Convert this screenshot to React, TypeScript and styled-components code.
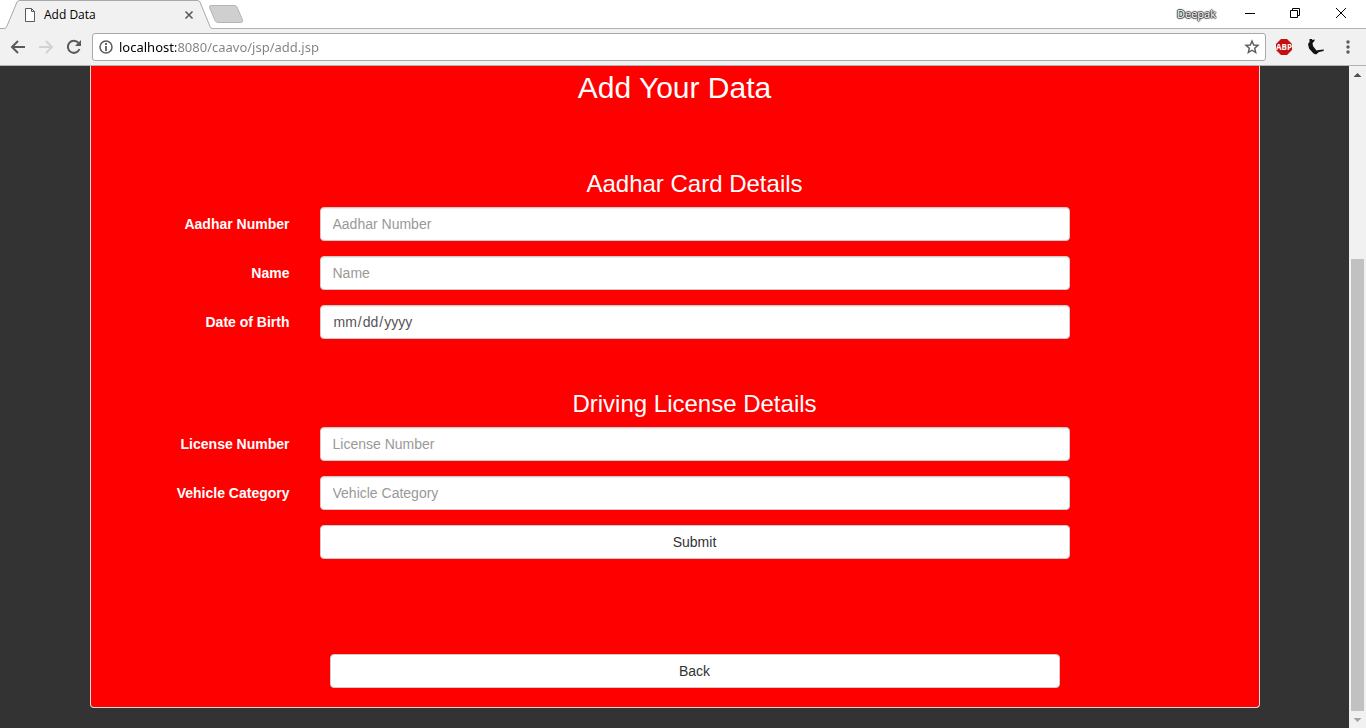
import React from 'react';
import styled, { createGlobalStyle } from 'styled-components';

const GlobalStyle = createGlobalStyle`
  *, *::before, *::after { box-sizing: border-box; }
  body {
    margin: 0;
    font-family: "Liberation Sans", Arial, sans-serif;
    font-size: 14px;
    line-height: 20px;
    color: #333;
  }
`;

const Browser = styled.div`
  display: flex;
  flex-direction: column;
  height: 100vh;
  overflow: hidden;
`;

const TitleBar = styled.header`
  display: flex;
  height: 29px;
  background: #fff;
  border-bottom: 1px solid #b3b3b3;
`;

const Tab = styled.div`
  position: relative;
  display: flex;
  align-items: center;
  width: 212px;
  height: 29px;
  padding: 0 17px 0 24px;
`;

const TabShape = styled.svg`
  position: absolute;
  inset: 0;
`;

const TabTitle = styled.span`
  position: relative;
  flex: 1;
  padding-left: 8px;
  font: 12px/20px "Open Sans", sans-serif;
  color: #000;
`;

const IconButton = styled.button<{ $width?: number }>`
  position: relative;
  display: flex;
  align-items: center;
  justify-content: center;
  width: ${({ $width }) => $width ?? 28}px;
  padding: 0;
  border: 0;
  background: none;
  color: #5a5a5a;
`;

const Icon = styled.svg`
  position: relative;
  display: block;
  flex: none;
`;

const WindowControls = styled.div`
  display: flex;
  align-items: stretch;
  height: 26px;
  margin-left: auto;
`;

const UserName = styled.span`
  padding: 0 10px;
  font: 11px/28px "Open Sans", sans-serif;
  color: #fff;
  text-shadow: 1px 0 1px #333, -1px 0 1px #333, 0 1px 1px #333, 0 -1px 1px #333;
`;

const Toolbar = styled.nav`
  display: flex;
  align-items: center;
  height: 37px;
  padding-left: 4px;
  background: #f1f1f1;
  border-bottom: 1px solid #b3b3b3;
`;

const AddressBar = styled.div`
  display: flex;
  flex: 1;
  align-items: center;
  height: 28px;
  margin-left: 4px;
  padding-left: 6px;
  background: #fff;
  border: 1px solid #a9a9a9;
  border-radius: 3px;
`;

const Address = styled.input`
  flex: 1;
  min-width: 0;
  height: 24px;
  margin-left: 6px;
  padding: 0;
  border: 0;
  outline: 0;
  font: 13px/24px "Noto Sans", sans-serif;
  color: transparent;
  background: linear-gradient(to right, #000 57px, #808080 57px);
  background-clip: text;
  -webkit-background-clip: text;
`;

const Viewport = styled.div`
  display: flex;
  flex: 1;
  min-height: 0;
  background: #333;
`;

const Page = styled.main`
  flex: 1;
  min-width: 0;
  overflow: hidden;
`;

const Panel = styled.section`
  max-width: 1170px;
  margin: 0 auto;
  padding: 5px 0 19px;
  background: #f00;
  border: 1px solid #ddd;
  border-top: 0;
  border-radius: 0 0 4px 4px;
  color: #fff;
`;

const Title = styled.h1`
  margin: 0;
  font-size: 30px;
  line-height: 33px;
  font-weight: 500;
  text-align: center;
`;

const Form = styled.form`
  padding-top: 30px;
`;

const Row = styled.div`
  display: grid;
  grid-template-columns: 199fr 750fr 159fr;
  column-gap: 30px;
  margin-bottom: 15px;
`;

const SectionTitle = styled.h2`
  grid-column: 2;
  margin: 37px 0 -5px;
  font-size: 24px;
  line-height: 26px;
  font-weight: 500;
  text-align: center;
`;

const Label = styled.label`
  padding-top: 7px;
  font-weight: 700;
  text-align: right;
`;

const Field = styled.input`
  width: 100%;
  height: 34px;
  padding: 6px 12px;
  font: 14px/20px "Liberation Sans", Arial, sans-serif;
  color: #555;
  background: #fff;
  border: 1px solid #ccc;
  border-radius: 4px;
  box-shadow: inset 0 1px 1px rgba(0, 0, 0, 0.08);
  &::placeholder { color: #999; opacity: 1; }
  &::-webkit-calendar-picker-indicator { display: none; }
`;

const Button = styled.button`
  grid-column: 2;
  height: 34px;
  padding: 6px 12px;
  font: 14px/20px "Liberation Sans", Arial, sans-serif;
  color: #333;
  background: #fff;
  border: 1px solid #ccc;
  border-radius: 4px;
`;

const BackRow = styled(Row)`
  margin: 95px 0 0;
  & > ${Button} { margin: 0 10px; }
`;

const Scrollbar = styled.aside`
  display: flex;
  flex-direction: column;
  align-items: center;
  width: 17px;
  padding: 0 2px;
  background: #f1f1f1;
`;

const Track = styled.div`
  display: flex;
  flex: 1;
  flex-direction: column;
  justify-content: flex-end;
  width: 100%;
`;

const Thumb = styled.div`
  height: 72%;
  background: #c1c1c1;
`;

interface FieldSpec {
  id: string;
  label: string;
  type?: string;
}

const aadharFields: FieldSpec[] = [
  { id: 'aadhar-number', label: 'Aadhar Number' },
  { id: 'name', label: 'Name' },
  { id: 'dob', label: 'Date of Birth', type: 'date' },
];

const licenseFields: FieldSpec[] = [
  { id: 'license-number', label: 'License Number' },
  { id: 'vehicle-category', label: 'Vehicle Category' },
];

function FieldGroup({ title, fields }: { title: string; fields: FieldSpec[] }) {
  return (
    <>
      <Row><SectionTitle>{title}</SectionTitle></Row>
      {fields.map(({ id, label, type = 'text' }) => (
        <Row key={id}>
          <Label htmlFor={id}>{label}</Label>
          <Field id={id} name={id} type={type} placeholder={label} />
        </Row>
      ))}
    </>
  );
}

function TabStrip() {
  return (
    <TitleBar>
      <Tab>
        <TabShape width="212" height="29" aria-hidden="true">
          <path d="M0 29V28.500H4Q6 28.500 7 26L17 2Q18 .5 20 .5H197Q199 .5 200 2L210 26.500Q211 28.500 212 28.500V29Z" fill="#f1f1f1" />
          <path d="M0 28.500H4Q6 28.500 7 26L17 2Q18 .5 20 .5H197Q199 .5 200 2L210 26.500Q211 28.500 212 28.500" fill="none" stroke="#a9a9a9" />
        </TabShape>
        <Icon width="12" height="14" viewBox="0 0 12 14" fill="#fff" stroke="#5a5a5a" aria-hidden="true">
          <path d="M1.500 .5H7.500L10.500 3.500V13.500H1.500ZM7.500 .5V3.500H10.500" />
        </Icon>
        <TabTitle>Add Data</TabTitle>
        <IconButton $width={12} aria-label="Close tab">
          <Icon width="10" height="10" viewBox="0 0 10 10" stroke="currentColor" strokeWidth="1.600">
            <path d="M1.500 1.500L8.500 8.500M8.500 1.500L1.500 8.500" />
          </Icon>
        </IconButton>
      </Tab>
      <IconButton $width={28} aria-label="New tab">
        <Icon width="36" height="18" viewBox="0 0 36 18" fill="#cfcfcf" stroke="#b5b5b5">
          <path d="M3 .5H26Q28 .5 29 2L34.500 15Q35 17.500 33 17.500H10Q8 17.500 7 15.500L1.500 2.500Q1 .5 3 .5Z" />
        </Icon>
      </IconButton>
      <WindowControls>
        <UserName>Deepak</UserName>
        <IconButton $width={48} aria-label="Minimize">
          <Icon width="12" height="12" stroke="#000"><path d="M1 6.500H11" /></Icon>
        </IconButton>
        <IconButton $width={42} aria-label="Restore">
          <Icon width="12" height="12" stroke="#000" fill="none">
            <path d="M1.500 3.500H8.500V10.500H1.500ZM3.500 3.500V1.500H10.500V8.500H8.500" />
          </Icon>
        </IconButton>
        <IconButton $width={50} aria-label="Close">
          <Icon width="12" height="12" stroke="#000"><path d="M1 1L11 11M11 1L1 11" /></Icon>
        </IconButton>
      </WindowControls>
    </TitleBar>
  );
}

function NavBar() {
  return (
    <Toolbar>
      <IconButton aria-label="Back">
        <Icon width="16" height="16" stroke="#5a5a5a" strokeWidth="2" fill="none">
          <path d="M15 8H2.500M8 2L2 8L8 14" />
        </Icon>
      </IconButton>
      <IconButton aria-label="Forward">
        <Icon width="16" height="16" stroke="#d3d3d3" strokeWidth="2" fill="none">
          <path d="M1 8H13.500M8 2L14 8L8 14" />
        </Icon>
      </IconButton>
      <IconButton aria-label="Reload">
        <Icon width="16" height="16" fill="none">
          <path d="M13.500 10A6 6 0 1 1 12.500 4" stroke="#5a5a5a" strokeWidth="2" />
          <path d="M15 1V7H9Z" fill="#5a5a5a" />
        </Icon>
      </IconButton>
      <AddressBar>
        <Icon width="14" height="14" fill="none" stroke="#5a5a5a" aria-hidden="true">
          <circle cx="7" cy="7" r="6" strokeWidth="1.500" />
          <path d="M7 3V5M7 6V11" strokeWidth="1.800" />
        </Icon>
        <Address type="text" aria-label="Address" defaultValue="localhost:8080/caavo/jsp/add.jsp" />
        <IconButton $width={26} aria-label="Bookmark">
          <Icon width="16" height="16" fill="none" stroke="#5a5a5a" strokeWidth="1.400">
            <path d="M8 2L9.700 6L14 6.400L10.700 9.200L11.700 13.500L8 11.200L4.300 13.500L5.300 9.200L2 6.400L6.300 6Z" />
          </Icon>
        </IconButton>
      </AddressBar>
      <IconButton $width={36} aria-label="Adblock Plus">
        <Icon width="16" height="16" viewBox="0 0 16 16">
          <path d="M5 0H11L16 5V11L11 16H5L0 11V5Z" fill="#c70d0d" />
          <text x="8" y="11" fontFamily="Open Sans, sans-serif" fontSize="8" fontWeight="700" fill="#fff" textAnchor="middle">ABP</text>
        </Icon>
      </IconButton>
      <IconButton aria-label="Extension">
        <Icon width="18" height="16" viewBox="0 0 18 16" fill="#111">
          <path d="M2.500 0H5L5.500 1L8 .5L7 2.500L5.500 4L6 7L7.500 9L9.500 11.500L12 11L17 10.500L16.500 12L12 13L9 15.500L6.500 14.500L2 9.500L1 5L2.500 3Z" />
        </Icon>
      </IconButton>
      <IconButton $width={36} aria-label="Menu">
        <Icon width="4" height="14" fill="#5a5a5a">
          <circle cx="2" cy="2" r="1.700" />
          <circle cx="2" cy="7" r="1.700" />
          <circle cx="2" cy="12" r="1.700" />
        </Icon>
      </IconButton>
    </Toolbar>
  );
}

export default function App() {
  return (
    <Browser>
      <GlobalStyle />
      <TabStrip />
      <NavBar />
      <Viewport>
        <Page>
          <Panel>
            <Title>Add Your Data</Title>
            <Form onSubmit={(event) => event.preventDefault()}>
              <FieldGroup title="Aadhar Card Details" fields={aadharFields} />
              <FieldGroup title="Driving License Details" fields={licenseFields} />
              <Row><Button type="submit">Submit</Button></Row>
              <BackRow><Button type="button">Back</Button></BackRow>
            </Form>
          </Panel>
        </Page>
        <Scrollbar aria-hidden="true">
          <Icon width="13" height="17" fill="#505050"><path d="M2.500 11L6.500 7L10.500 11Z" /></Icon>
          <Track><Thumb /></Track>
          <Icon width="13" height="17" fill="#a3a3a3"><path d="M2.500 7L6.500 11L10.500 7Z" /></Icon>
        </Scrollbar>
      </Viewport>
    </Browser>
  );
}
